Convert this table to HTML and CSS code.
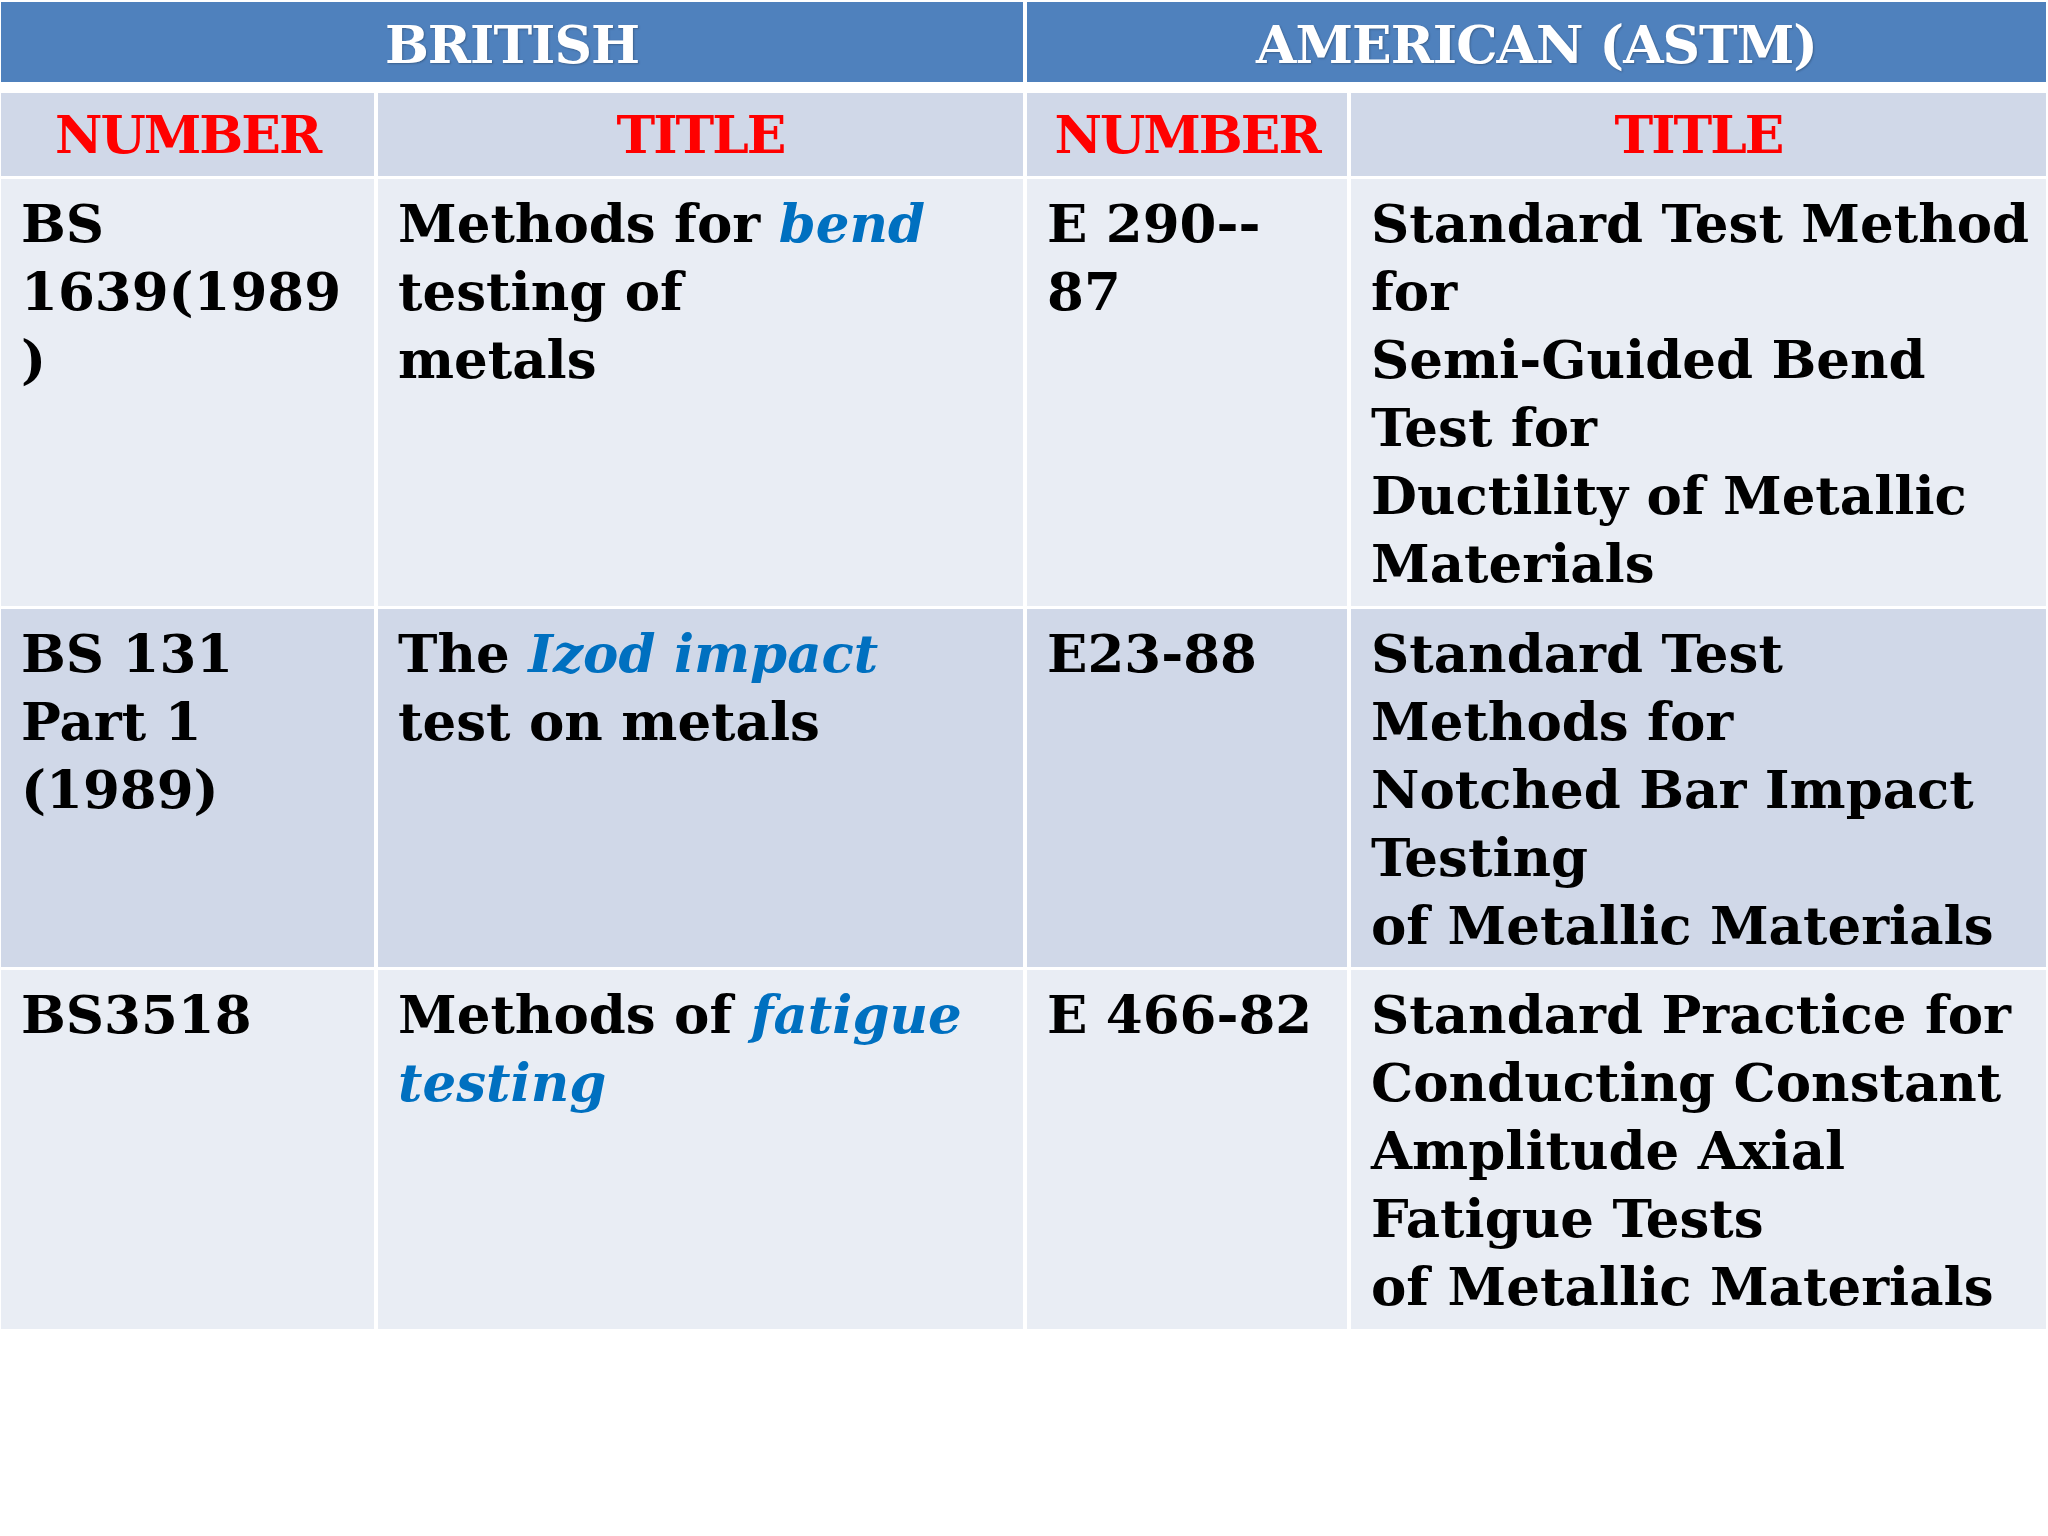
FILE: index.html
```html
<!DOCTYPE html>
<html>
<head>
<meta charset="utf-8">
<link rel="stylesheet" href="styles.css">
</head>
<body>
<div class="table">
  <div class="group">BRITISH</div>
  <div class="group">AMERICAN (ASTM)</div>

  <div class="head">NUMBER</div>
  <div class="head">TITLE</div>
  <div class="head">NUMBER</div>
  <div class="head">TITLE</div>

  <div class="cell light">BS<br>1639(1989<br>)</div>
  <div class="cell light">Methods for <em>bend</em><br>testing of<br>metals</div>
  <div class="cell light">E 290--<br>87</div>
  <div class="cell light">Standard Test Method<br>for<br>Semi-Guided Bend<br>Test for<br>Ductility of Metallic<br>Materials</div>

  <div class="cell dark">BS 131<br>Part 1<br>(1989)</div>
  <div class="cell dark">The <em>Izod impact</em><br>test on metals</div>
  <div class="cell dark">E23-88</div>
  <div class="cell dark">Standard Test<br>Methods for<br>Notched Bar Impact<br>Testing<br>of Metallic Materials</div>

  <div class="cell light">BS3518</div>
  <div class="cell light">Methods of <em>fatigue</em><br><em>testing</em></div>
  <div class="cell light">E 466-82</div>
  <div class="cell light">Standard Practice for<br>Conducting Constant<br>Amplitude Axial<br>Fatigue Tests<br>of Metallic Materials</div>
</div>
</body>
</html>
```

FILE: styles.css
```css
html, body {
  margin: 0;
  padding: 0;
  background: #ffffff;
}

body {
  width: 2048px;
  height: 1536px;
  font-family: "DejaVu Serif", "Liberation Serif", serif;
  font-weight: bold;
}

.table {
  display: grid;
  grid-template-columns: 373px 645px 320px 695px;
  grid-template-rows: 88px 83px 427px 358px 359px;
  column-gap: 4px;
  row-gap: 3px;
  padding-top: 2px;
  padding-left: 1px;
}

.group {
  grid-column: span 2;
  background: #4f81bd;
  color: #ffffff;
  font-size: 52px;
  letter-spacing: -1px;
  display: flex;
  align-items: center;
  justify-content: center;
  margin-bottom: 8px;
  padding-top: 4px;
  box-sizing: border-box;
  text-shadow: 1px 1px 2px rgba(0, 0, 0, 0.25);
}

.head {
  background: #d0d8e8;
  color: #ff0000;
  font-size: 52px;
  letter-spacing: -2px;
  display: flex;
  align-items: center;
  justify-content: center;
}

.cell {
  font-size: 53px;
  line-height: 68px;
  color: #000000;
  padding: 10px 0 0 20px;
  white-space: nowrap;
  box-sizing: border-box;
}

.cell em {
  color: #0070c0;
  font-style: italic;
}

.light {
  background: #e9edf4;
}

.dark {
  background: #d0d8e8;
}
```
